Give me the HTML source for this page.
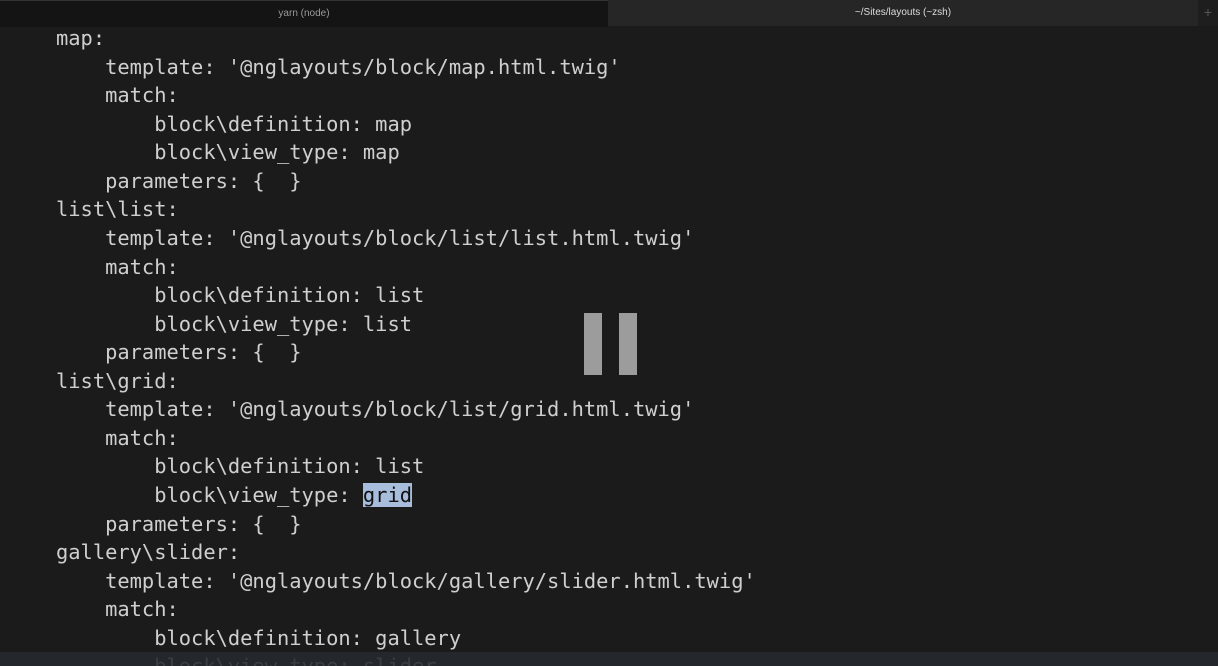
<!DOCTYPE html>
<html><head><meta charset="utf-8"><style>
html,body{margin:0;padding:0;background:#1b1b1b;width:1218px;height:666px;overflow:hidden;position:relative}
.tabs{position:absolute;top:0;left:0;width:1218px;height:26px;font:10px "Liberation Sans",sans-serif;color:#9a9a9a}
.t1{position:absolute;left:0;top:0;width:608px;height:26px;background:#141414;text-align:center;line-height:26px;border-top:1px solid #333}
.t2{position:absolute;left:608px;top:0;width:590px;height:26px;background:#262626;text-align:center;line-height:26px;color:#ddd}
.t3{position:absolute;left:1198px;top:0;width:20px;height:26px;background:#1e1e1e;color:#555;text-align:center;line-height:24px;font-size:14px}
pre{position:absolute;left:56px;top:24px;margin:0;font:20.4px/28.57px "DejaVu Sans Mono","Liberation Mono",monospace;color:#cfcfcf;white-space:pre}
.hl{background:#a7bddb;color:#111}
.p{position:absolute;top:313px;width:18px;height:62px;background:#9c9c9c}
.bar{position:absolute;left:0;top:652px;width:1218px;height:14px;background:rgba(38,42,48,.88)}
</style></head><body>
<div class="tabs"><div class="t1">yarn (node)</div><div class="t2">~/Sites/layouts (~zsh)</div><div class="t3">+</div></div>
<pre>map:
    template: '@nglayouts/block/map.html.twig'
    match:
        block\definition: map
        block\view_type: map
    parameters: {  }
list\list:
    template: '@nglayouts/block/list/list.html.twig'
    match:
        block\definition: list
        block\view_type: list
    parameters: {  }
list\grid:
    template: '@nglayouts/block/list/grid.html.twig'
    match:
        block\definition: list
        block\view_type: <span class="hl">grid</span>
    parameters: {  }
gallery\slider:
    template: '@nglayouts/block/gallery/slider.html.twig'
    match:
        block\definition: gallery
        block\view_type: slider</pre>
<div class="p" style="left:584px"></div><div class="p" style="left:619px"></div>
<div class="bar"></div>
</body></html>
